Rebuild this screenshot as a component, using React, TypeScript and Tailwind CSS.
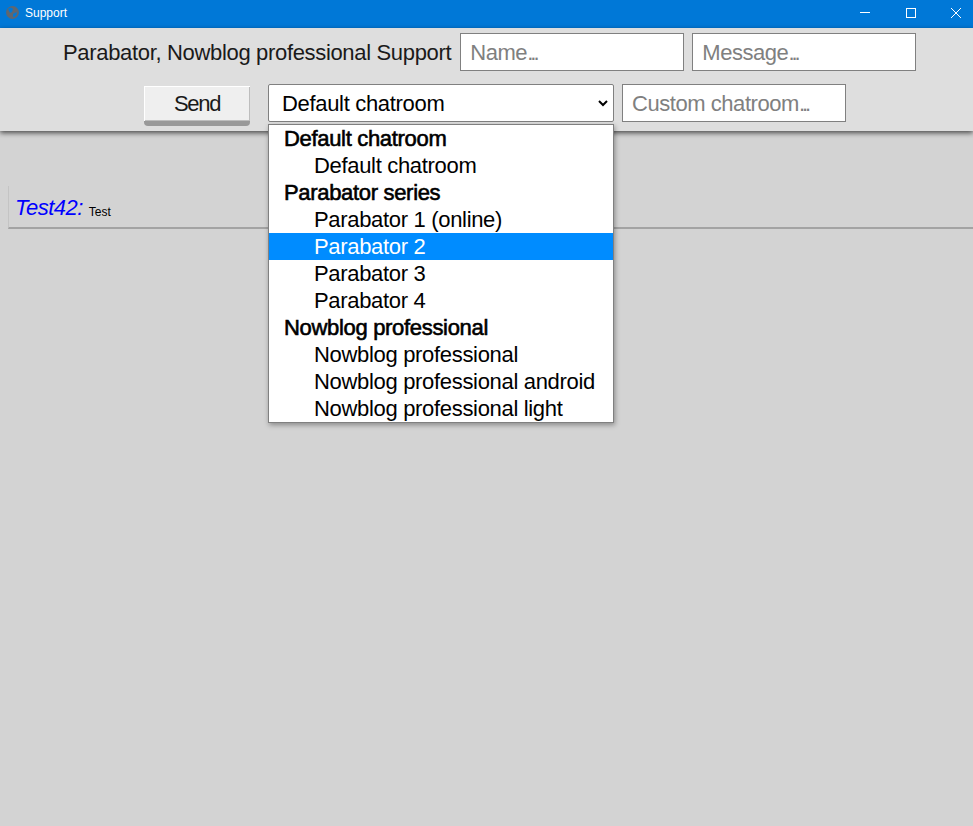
const fontStack = "font-['Liberation_Sans',Arial,sans-serif]";

type OptionRow = {
  label: string;
  group?: boolean;
  selected?: boolean;
};

const rows: OptionRow[] = [
  { label: "Default chatroom", group: true },
  { label: "Default chatroom" },
  { label: "Parabator series", group: true },
  { label: "Parabator 1 (online)" },
  { label: "Parabator 2", selected: true },
  { label: "Parabator 3" },
  { label: "Parabator 4" },
  { label: "Nowblog professional", group: true },
  { label: "Nowblog professional" },
  { label: "Nowblog professional android" },
  { label: "Nowblog professional light" },
];

function TitleBar() {
  return (
    <div className="flex h-[28px] items-center bg-[#0078d7] pl-[5px] text-white">
      <svg width="15" height="15" viewBox="0 0 15 15" className="mb-[3px]">
        <circle cx="7.5" cy="7.5" r="6.5" fill="#5f6770" />
        <path d="M3 4 C5 2 7 3 8 4 L7 7 L5 8 Z M8 9 L12 7 C12 9 11 11 9 12 L8 12 Z" fill="#0078d7" />
      </svg>
      <span className="mb-[2px] ml-[5px] text-[12px] leading-none">Support</span>
      <div className="ml-auto flex items-center gap-[35px] pb-[3px] pr-[12px]">
        <div className="mr-px h-px w-[10px] bg-white" />
        <div className="size-[10px] border border-white" />
        <svg width="10" height="10" viewBox="0 0 10 10" stroke="white" strokeWidth="1">
          <path d="M0 0 L10 10 M10 0 L0 10" />
        </svg>
      </div>
    </div>
  );
}

function TextBox({ placeholder, width }: { placeholder: string; width: string }) {
  return (
    <div
      className={`flex h-[38px] items-center border border-[#808080] bg-white pl-[9px] pt-[2px] text-[22px] leading-none tracking-[-0.45px] text-[#808080] ${width}`}
    >
      {placeholder}
      <span className="tracking-[-3px]">...</span>
    </div>
  );
}

function Dropdown() {
  return (
    <div className="absolute left-0 top-[40px] z-10 w-[346px] border border-[#808080] bg-white text-[22px] leading-[27px] tracking-[-0.32px] text-black shadow-[1px_2px_5px_rgba(0,0,0,0.35)]">
      {rows.map((row, index) => (
        <div
          key={index}
          className={`h-[27px] whitespace-nowrap ${row.group ? "pl-[15px] [-webkit-text-stroke:0.6px_black]" : "pl-[45px]"} ${row.selected ? "bg-[#008cff] text-white" : ""}`}
        >
          {row.label}
        </div>
      ))}
    </div>
  );
}

function Header() {
  return (
    <div className="relative z-10 h-[103px] bg-[#dedede] text-[22px] text-[#1a1a1a] shadow-[0_2px_5px_rgba(0,0,0,0.65)]">
      <div className="flex items-center pl-[63px] pt-[5px]">
        <span className="mr-[9px] pt-[2px] leading-none tracking-[-0.33px]">
          Parabator, Nowblog professional Support
        </span>
        <TextBox placeholder="Name" width="w-[224px]" />
        <div className="w-[8px]" />
        <TextBox placeholder="Message" width="w-[224px]" />
      </div>
      <div className="flex items-start pl-[144px] pt-[13px]">
        <button className="mt-[2px] flex h-[40px] w-[106px] items-center justify-center rounded-b-[4px] border-b-[5px] border-[#999999] bg-[#efefef] pt-px text-[22px] leading-none tracking-[-1.3px] shadow-[inset_1px_1px_0_#ffffff,inset_-1px_-1px_0_#bdbdbd]">
          Send
        </button>
        <div className="relative ml-[18px]">
          <div className="flex h-[38px] w-[346px] items-center justify-between rounded-[2px] border border-[#808080] bg-white pl-[13px] pr-[5px] text-black">
            <span className="pt-[2px] leading-none tracking-[-0.32px]">Default chatroom</span>
            <svg width="10" height="7" viewBox="0 0 10 7" fill="none" stroke="black" strokeWidth="2">
              <path d="M1 1 L5 5 L9 1" />
            </svg>
          </div>
          <Dropdown />
        </div>
        <div className="ml-[8px]">
          <TextBox placeholder="Custom chatroom" width="w-[224px]" />
        </div>
      </div>
    </div>
  );
}

function ChatMessage() {
  return (
    <div className="ml-[8px] mt-[55px] flex h-[43px] items-end border-b-2 border-l border-[#a3a3a3] border-l-[#c4c4c4] pb-[8px] pl-[6px]">
      <span className="text-[22px] italic leading-none tracking-[-0.5px] text-[#0000ff]">Test42:</span>
      <span className="ml-[6px] text-[12px] leading-[14px] text-black">Test</span>
    </div>
  );
}

export default function App() {
  return (
    <div className={`h-[826px] w-[973px] overflow-hidden bg-[#d3d3d3] ${fontStack}`}>
      <TitleBar />
      <Header />
      <ChatMessage />
    </div>
  );
}
